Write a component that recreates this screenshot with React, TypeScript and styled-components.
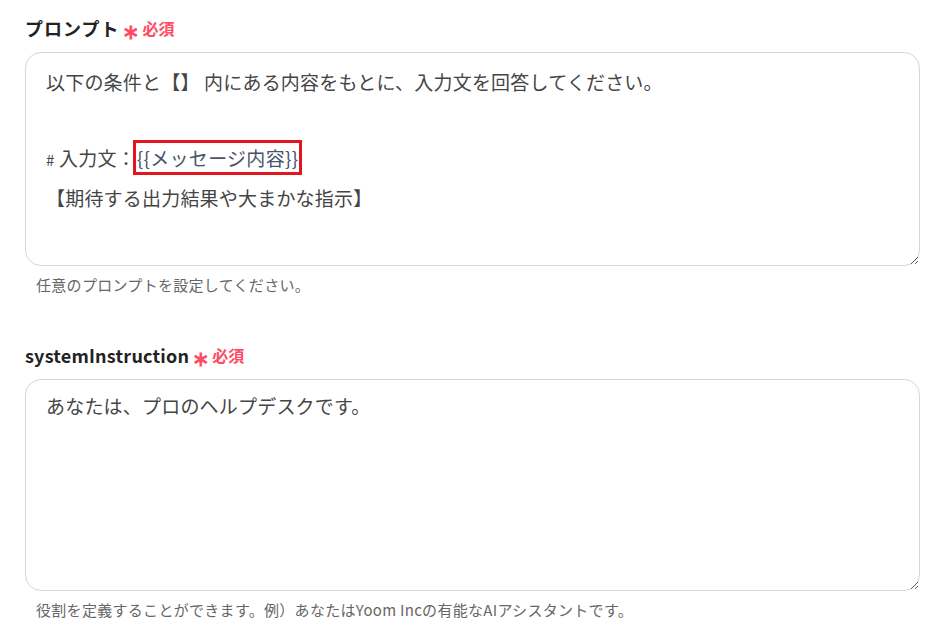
import React from 'react'
import styled, { createGlobalStyle } from 'styled-components'

const GlobalStyle = createGlobalStyle`
    html, body {
        margin: 0;
        padding: 0;
        background: #ffffff;
    }
    body {
        font-family: "Noto Sans CJK JP", "Noto Sans", sans-serif;
        color: #444;
    }
`

const Page = styled.div`
    width: 940px;
    padding: 14px 20px 0 25px;
    box-sizing: border-box;
    display: flex;
    flex-direction: column;
    gap: 45px;
`

const Field = styled.section`
    display: flex;
    flex-direction: column;
`

const Label = styled.div`
    display: flex;
    align-items: center;
    height: 28px;
    margin-bottom: 10px;
    color: #222;
`

const LabelText = styled.span<{ $spacing: number }>`
    font-size: 18px;
    font-weight: 700;
    letter-spacing: ${p => p.$spacing}px;
`

const Required = styled.span`
    display: inline-flex;
    align-items: center;
    gap: 2px;
    margin-left: 3px;
    color: #ff4b64;
    font-size: 16px;
    font-weight: 700;
`

const Star = styled.span`
    font-size: 21px;
    line-height: 1;
    margin-top: 5px;
`

const Box = styled.div<{ $h: number; $pt: number }>`
    height: ${p => p.$h}px;
    box-sizing: border-box;
    border: 1px solid #d3d7de;
    border-radius: 16px;
    padding: ${p => p.$pt}px 20px 0;
    overflow: auto;
    resize: vertical;
    font-size: 19px;
    letter-spacing: 0.2px;
    line-height: 38px;
    color: #454545;
    white-space: pre-wrap;
`

const Hash = styled.span`
    font-size: 15px;
`

const Variable = styled.span`
    display: inline-block;
    line-height: 29px;
    margin-top: 2px;
    outline: 3px solid #e3161f;
    padding: 0 1px;
    color: #48526a;
    letter-spacing: 0.3px;
`

const Help = styled.div`
    margin-top: 8px;
    padding-left: 11px;
    font-size: 15px;
    letter-spacing: 0.3px;
    color: #666;
    line-height: 22px;
`

export default function App() {
    return <>
        <GlobalStyle />
        <Page>
            <Field>
                <Label>
                    <LabelText $spacing={1}>プロンプト</LabelText>
                    <Required><Star>∗</Star>必須</Required>
                </Label>
                <Box $h={214} $pt={10}>
                    {'以下の条件と【】 内にある内容をもとに、入力文を回答してください。\n\n'}
                    <Hash>#</Hash>{' 入力文：'}<Variable>{'{{メッセージ内容}}'}</Variable>
                    {'\n【期待する出力結果や大まかな指示】'}
                </Box>
                <Help>任意のプロンプトを設定してください。</Help>
            </Field>
            <Field>
                <Label>
                    <LabelText $spacing={0.2}>systemInstruction</LabelText>
                    <Required><Star>∗</Star>必須</Required>
                </Label>
                <Box $h={212} $pt={7}>あなたは、プロのヘルプデスクです。</Box>
                <Help>役割を定義することができます。例）あなたはYoom Incの有能なAIアシスタントです。</Help>
            </Field>
        </Page>
    </>
}
